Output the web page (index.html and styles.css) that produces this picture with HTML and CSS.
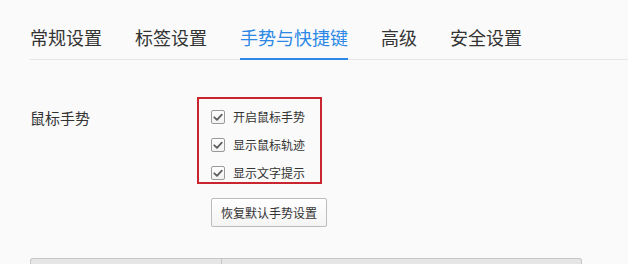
FILE: index.html
```html
<!DOCTYPE html>
<html lang="zh-CN">
<head>
<meta charset="utf-8">
<title>设置</title>
<link rel="stylesheet" href="styles.css">
</head>
<body>
<nav class="tabs">
  <a class="tab">常规设置</a>
  <a class="tab">标签设置</a>
  <a class="tab active">手势与快捷键</a>
  <a class="tab">高级</a>
  <a class="tab">安全设置</a>
</nav>
<section class="setting">
  <div class="label">鼠标手势</div>
  <div class="controls">
    <div class="options">
      <label class="opt"><span class="check"><svg viewBox="0 0 14 14" width="14" height="14"><path d="M3.3 7.3 L6 9.9 L10.8 4.7" fill="none" stroke="#5e5e5e" stroke-width="1.8" stroke-linecap="round" stroke-linejoin="round"/></svg></span>开启鼠标手势</label>
      <label class="opt"><span class="check"><svg viewBox="0 0 14 14" width="14" height="14"><path d="M3.3 7.3 L6 9.9 L10.8 4.7" fill="none" stroke="#5e5e5e" stroke-width="1.8" stroke-linecap="round" stroke-linejoin="round"/></svg></span>显示鼠标轨迹</label>
      <label class="opt"><span class="check"><svg viewBox="0 0 14 14" width="14" height="14"><path d="M3.3 7.3 L6 9.9 L10.8 4.7" fill="none" stroke="#5e5e5e" stroke-width="1.8" stroke-linecap="round" stroke-linejoin="round"/></svg></span>显示文字提示</label>
    </div>
    <button class="btn">恢复默认手势设置</button>
  </div>
</section>
<div class="table">
  <div class="th th1"></div>
  <div class="th th2"></div>
</div>
</body>
</html>
```
FILE: styles.css
```css
html, body {
  margin: 0;
  padding: 0;
}
body {
  background: #fafafa;
  font-family: "Noto Sans CJK SC", "Noto Sans", sans-serif;
  color: #333;
  overflow: hidden;
}
.tabs {
  display: flex;
  gap: 33px;
  margin-left: 30px;
  border-bottom: 1px solid #e6e6e6;
  height: 59px;
}
.tab {
  display: block;
  font-size: 18px;
  line-height: 24px;
  padding-top: 25px;
  padding-bottom: 9px;
  height: 24px;
  border-bottom: 2px solid transparent;
  color: #333;
  cursor: pointer;
}
.tab.active {
  color: #2b88e6;
  border-bottom-color: #2b88e6;
}
.setting {
  display: grid;
  grid-template-columns: 167px auto;
  margin-top: 37px;
  padding-left: 30px;
}
.label {
  font-size: 15px;
  line-height: 20px;
  padding-top: 11px;
  color: #333;
}
.controls {
  display: flex;
  flex-direction: column;
  align-items: flex-start;
}
.options {
  display: flex;
  flex-direction: column;
  gap: 14px;
  border: 2px solid #c9252f;
  padding: 11px 15px 2px 12px;
}
.opt {
  display: flex;
  align-items: center;
  gap: 8px;
  height: 14px;
  font-size: 12px;
  line-height: 14px;
  color: #333;
}
.check {
  display: block;
  width: 12px;
  height: 12px;
  border: 1px solid #9a9a9a;
  border-radius: 2px;
  background: linear-gradient(#ffffff, #f2f2f2);
  position: relative;
}
.check svg {
  position: absolute;
  left: -1px;
  top: -1px;
}
.btn {
  margin-top: 14px;
  margin-left: 14px;
  height: 29px;
  width: 116px;
  padding: 0;
  border: 1px solid #bcbcbc;
  border-radius: 2px;
  background: linear-gradient(#ffffff, #f4f4f4);
  font-family: "Noto Sans CJK SC", sans-serif;
  font-size: 12px;
  color: #333;
}
.table {
  display: grid;
  grid-template-columns: 191px 1fr;
  margin: 31px 0 0 30px;
  width: 552px;
  height: 6px;
  box-sizing: border-box;
  border: 1px solid #c6c6c6;
  border-bottom: 0;
  border-radius: 3px 3px 0 0;
  background: #e6e6e6;
}
.th1 {
  border-right: 1px solid #c6c6c6;
}
```
